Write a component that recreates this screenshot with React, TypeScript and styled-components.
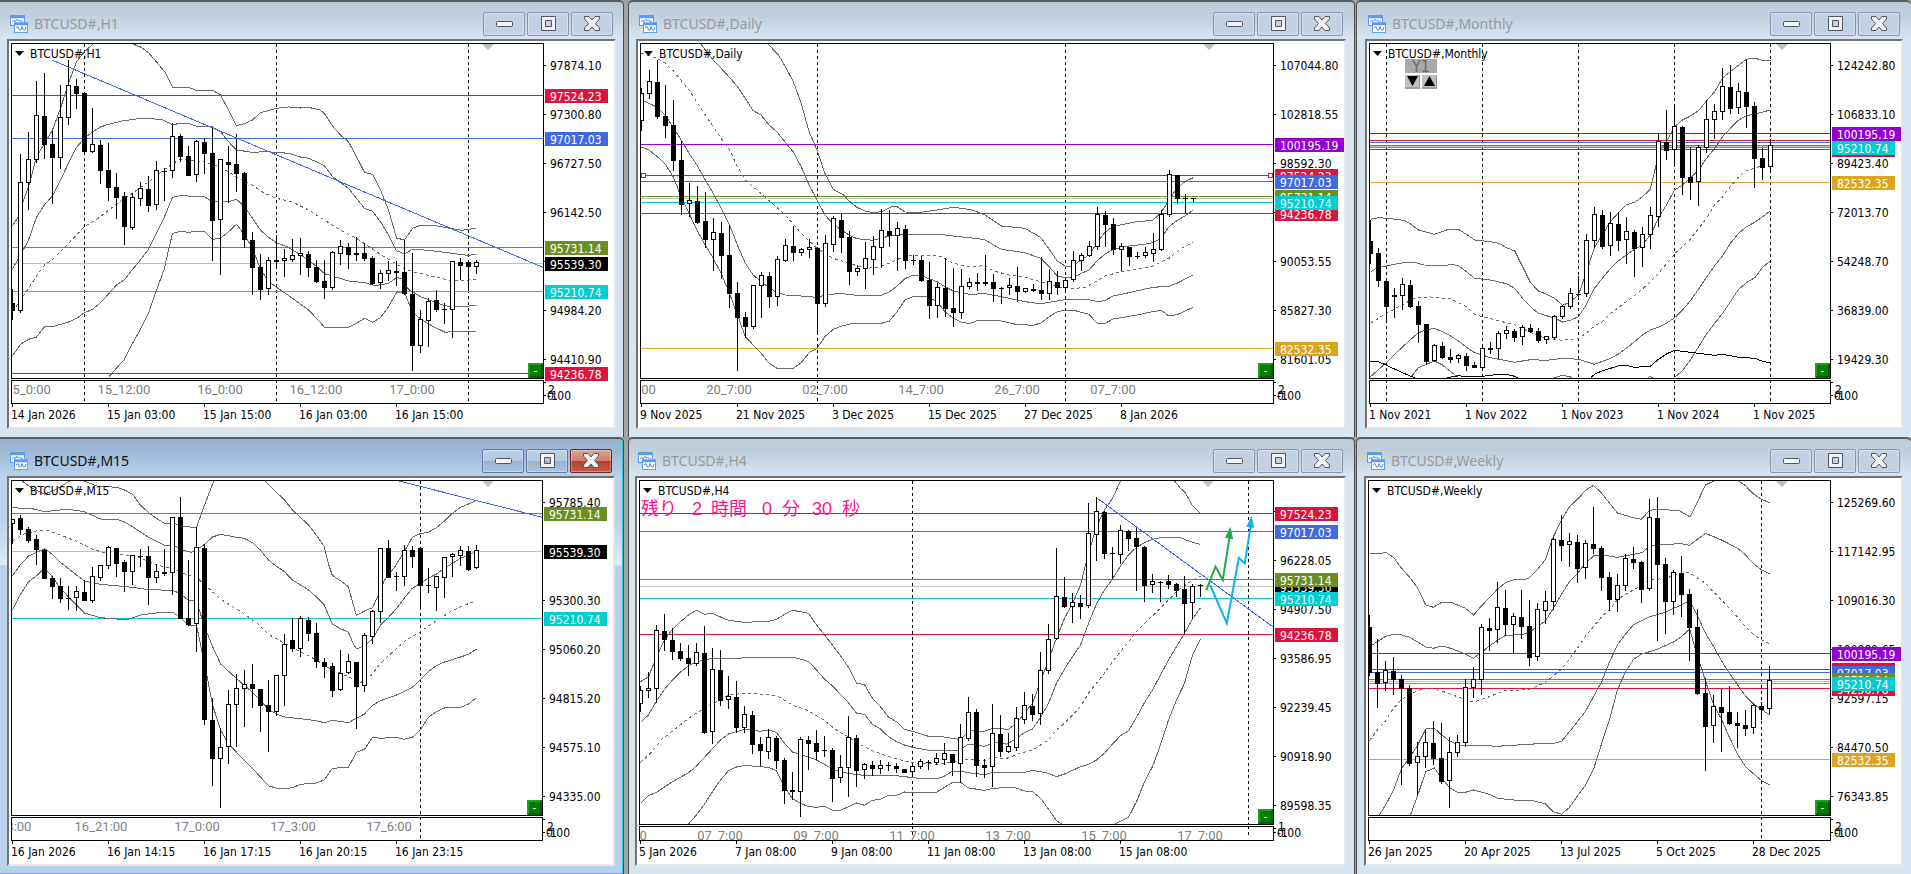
import React from "react";
import styled, { createGlobalStyle, css } from "styled-components";

const GlobalStyle = createGlobalStyle`
  * { box-sizing: border-box; }
  body {
    margin: 0;
    background: #a9a9a9;
    font-family: "Noto Sans", "Open Sans", sans-serif;
  }
`;

const AXIS_FONT = '"DejaVu Sans Condensed", "Noto Sans", sans-serif';

const COLORS = {
  crimson: "#dc143c",
  blue: "#4169e1",
  olive: "#6b8e23",
  silver: "#c0c0c0",
  turquoise: "#00ced1",
  violet: "#9400d3",
  gold: "#daa520",
  black: "#000000",
};

type ColorName = keyof typeof COLORS;

/* ---------- chart model ---------- */

/* Levels run downwards, three units to a pixel. Series x values use each
   chart's own scale: originX is the first bar, unitsX the units in a pixel. */
interface Mark {
  color: ColorName;
  level: number;
  price?: string;
}

interface ChartSpec {
  id: string;
  name: string;
  active?: boolean;
  insetLeft: number;
  insetRight: number;
  edges: "right" | "both" | "left";
  plotHeight: number;
  subHeight: number;
  baseY: number;
  originX: number;
  unitsX: number;
  candles: string;
  bands: string[];
  middle: string;
  extra?: string[];
  trend?: string;
  verticals: number[];
  marks: Mark[];
  scale: [number, string][];
  dates: string[];
  hours?: { start: number; step: number; labels: string[] };
  shiftMark: number;
  selected?: number;
  countdown?: boolean;
  forecast?: boolean;
  stepper?: boolean;
  subTop: string;
}

const BAR = 8;
const FIRST_BAR = 1;

const TOP = { plotHeight: 336, subHeight: 24, baseY: 43, subTop: "2" };
const BOTTOM = { plotHeight: 336, subHeight: 24, baseY: 50, subTop: "2" };

const charts: ChartSpec[] = [
  {
    ...TOP,
    id: "h1",
    name: "BTCUSD#,H1",
    insetLeft: 7,
    insetRight: 7,
    edges: "right",
    originX: 37,
    unitsX: 3,
    candles: `867,909,934,960,f 462,550,932,938,h 396,481,550,630,h 243,349,481,488,h 219,348,434,476,f
      393,432,474,612,f 255,355,473,507,h 180,259,355,375,h 237,258,282,327,f 277,279,456,458,f
      324,436,456,459,h 420,435,513,552,f 429,510,564,603,f 519,561,594,657,f 576,588,681,735,f
      579,595,683,690,h 545,568,598,618,h 528,567,618,636,f 483,514,616,630,h 504,513,515,603,f
      369,412,514,534,h 402,408,471,486,f 438,468,528,528,f 420,427,526,546,h 414,426,462,522,f
      384,459,663,783,f 477,481,661,825,h 438,486,494,609,f 402,492,522,576,f 516,519,720,744,f
      696,720,804,885,f 762,801,870,900,f 771,784,868,885,h 705,780,785,798,f 747,778,784,831,h
      717,769,779,785,h 714,763,769,825,h 753,762,804,831,f 780,801,846,849,f 780,843,864,897,f
      753,760,865,870,h 720,742,761,795,h 729,741,765,807,f 711,759,765,783,f 729,759,777,783,f
      768,774,852,855,f 810,823,850,867,h 783,814,823,843,h 783,813,819,858,f 720,816,882,885,f
      759,882,1038,1113,f 930,961,1037,1059,h 894,907,964,1041,h 870,900,930,936,f 909,927,930,972,f
      786,787,929,1014,h 774,786,798,840,f 780,786,801,873,f 780,790,800,822,h`,
    bands: [
      "37,678 61,640 70,600 85,562 109,470 133,430 157,390 181,325 205,250 229,185 253,155 280,131",
      "395,131 420,140 445,158 470,187 496,218 517,262 565,262 592,273 637,271 661,285 685,330 709,377 735,370 757,360 781,338 829,325 865,321 901,324 925,322 959,330 973,341 997,378 1021,405 1045,425 1069,470 1093,517 1117,523 1141,570 1165,630 1189,714 1213,720 1237,685 1261,676 1310,678 1345,684 1385,691 1427,685",
      "37,806 61,765 85,720 109,652 133,614 157,587 181,540 205,490 229,442 253,415 277,395 301,381 325,373 361,364 420,355 485,358 517,374 541,370 565,370 589,379 637,381 661,395 685,425 709,450 757,457 800,455 865,460 901,471 925,475 959,490 973,497 997,530 1021,548 1045,565 1069,595 1093,625 1117,634 1141,665 1165,705 1189,752 1213,762 1237,748 1285,751 1350,759 1400,766 1427,764",
      "37,1067 61,1033 85,1018 109,1011 133,980 157,980 205,966 229,955 253,938 277,928 301,908 325,882 349,855 373,839 397,808 421,780 445,748 469,700 493,650 517,592 541,587 613,590 637,606 685,605 709,598 733,620 757,655 781,690 805,712 829,728 865,742 901,765 925,780 959,808 973,821 1045,843 1093,848 1125,857 1165,850 1189,833 1205,835 1225,868 1261,890 1325,914 1345,919 1400,919 1427,915",
      "325,1132 349,1104 373,1078 397,1030 421,988 445,940 469,870 493,805 505,750 517,700 541,694 565,697 589,694 613,695 637,718 661,715 685,695 709,673 733,705 757,745 781,808 805,843 829,862 877,895 925,930 959,965 973,982 1045,982 1069,970 1093,955 1117,967 1141,953 1165,920 1189,878 1213,878 1237,935 1261,957 1300,980 1335,997 1350,995 1427,995",
    ],
    middle:
      "37,935 61,900 85,865 109,828 133,795 157,778 181,755 205,730 253,680 301,650 349,612 397,580 445,545 493,508 520,490 541,477 613,485 661,502 709,530 757,556 793,580 829,595 877,606 925,630 973,660 1021,691 1069,715 1141,763 1213,806 1237,815 1285,826 1345,840 1400,841 1427,838",
    trend: "157,181 1631,803",
    verticals: [253, 829, 1405],
    marks: [
      { color: "crimson", level: 286, price: "97524.23" },
      { color: "crimson", level: 1120, price: "94236.78" },
      { color: "blue", level: 415, price: "97017.03" },
      { color: "olive", level: 742, price: "95731.14" },
      { color: "silver", level: 790, price: "95539.30" },
      { color: "turquoise", level: 874, price: "95210.74" },
    ],
    scale: [[196, "97874.10"], [343, "97300.80"], [490, "96727.50"], [637, "96142.50"], [784, ""], [931, "94984.20"], [1078, "94410.90"]],
    dates: ["14 Jan 2026", "15 Jan 03:00", "15 Jan 15:00", "16 Jan 03:00", "16 Jan 15:00"],
    hours: { start: 17, step: 96, labels: ["15_0:00", "15_12:00", "16_0:00", "16_12:00", "17_0:00"] },
    shiftMark: 477,
  },
  {
    ...TOP,
    id: "daily",
    name: "BTCUSD#,Daily",
    insetLeft: 7,
    insetRight: 8,
    edges: "both",
    originX: 36,
    unitsX: 2.148,
    candles: `264,283,362,392,h 210,247,283,298,h 180,246,351,357,f 255,348,378,414,f 300,375,483,513,f
      423,480,615,645,f 549,604,613,650,h 558,603,669,672,f 576,663,720,744,f 654,700,719,813,h
      666,699,768,837,f 675,765,882,924,f 846,879,954,1112,f 936,950,981,1014,f 856,857,980,986,h
      815,829,857,954,h 816,828,891,924,f 768,781,890,918,h 717,739,782,785,h 678,738,759,783,f
      744,751,758,769,h 717,744,751,774,h 741,743,912,1000,f 706,733,911,921,h 648,658,734,756,h
      642,660,714,759,f 693,711,816,855,f 796,808,815,828,h 726,778,808,867,h 708,742,779,825,h
      627,694,743,804,h 630,693,708,741,f 666,688,707,813,h 675,687,783,807,f 765,779,783,795,f
      768,780,843,846,f 786,840,918,957,f 850,864,917,954,h 774,864,927,951,f 804,924,939,981,f
      807,862,938,957,h 835,850,862,868,h 819,847,851,873,f 765,845,852,859,f 822,846,867,906,f
      861,864,868,912,f 834,859,865,885,h 801,858,876,906,f 864,868,875,880,h 852,867,872,876,f
      771,870,882,900,f 807,847,881,900,h 813,846,864,885,f 834,844,863,870,h 753,784,841,846,h
      760,767,784,813,h 723,742,767,770,h 621,646,742,750,h 633,645,675,741,f 654,672,750,765,f
      729,742,751,813,h 741,742,771,798,f 756,768,771,777,f 741,760,769,774,h 699,751,761,786,h
      630,646,751,754,h 510,526,646,650,h 525,525,597,612,f 582,594,597,640,f 595,595,598,606,f`,
    bands: [
      "307,131 330,165 345,200 362,245 379,310 396,395 413,450 430,520 448,568 470,585 482,603 499,622 516,633 534,638 551,635 575,619 585,620 602,636 637,637 671,630 706,622 745,629 774,645 809,678 860,685 894,713 912,748 929,783 946,798 960,800 980,780 997,765 1015,728 1032,696 1049,680 1066,674 1100,665 1134,661 1152,638 1169,600 1186,565 1203,545 1221,533",
      "163,131 173,150 190,180 207,205 225,232 242,260 259,295 276,332 293,345 310,375 327,396 345,427 362,456 379,500 396,555 413,600 430,645 448,672 465,690 482,705 499,716 534,721 568,708 602,702 671,702 706,708 760,716 774,720 809,748 860,758 894,775 912,800 929,828 946,833 963,832 997,810 1015,782 1032,762 1049,748 1083,738 1117,733 1134,728 1152,715 1169,680 1186,662 1203,648 1221,630",
      "36,300 52,310 70,322 87,345 104,382 121,420 138,460 155,495 173,540 190,580 207,625 225,675 242,735 259,790 276,825 293,845 310,863 327,878 345,885 379,888 413,892 430,886 460,880 499,886 551,886 568,876 585,858 602,836 619,826 637,827 671,845 688,860 706,873 740,883 774,881 809,890 860,905 894,911 946,899 980,900 997,899 1018,905 1032,901 1049,888 1083,878 1134,862 1169,859 1186,850 1221,825",
      "36,441 52,450 70,470 87,492 104,530 121,590 138,640 155,690 173,735 190,775 207,820 225,880 242,945 259,1010 276,1035 293,1060 310,1090 327,1105 362,1105 379,1088 396,1058 413,1045 430,1010 448,988 465,979 490,970 551,970 568,964 585,935 602,900 619,890 650,890 671,905 688,935 706,955 723,966 740,971 757,962 809,963 840,973 877,976 894,969 912,950 929,935 946,931 965,931 980,937 997,943 1015,970 1032,970 1049,957 1100,945 1134,935 1152,931 1169,948 1186,944 1221,922",
    ],
    middle:
      "36,160 70,175 87,190 104,212 138,270 173,345 207,415 225,450 242,500 259,540 276,560 310,602 345,645 379,700 413,745 448,775 482,790 516,805 540,803 568,790 602,768 650,765 680,770 706,790 740,800 774,797 792,813 826,825 860,832 894,845 929,860 963,866 990,862 1032,828 1066,815 1100,808 1134,798 1169,775 1195,745 1221,728",
    verticals: [413, 946],
    marks: [
      { color: "silver", level: 595 },
      { color: "crimson", level: 526, price: "97524.23" },
      { color: "crimson", level: 640, price: "94236.78" },
      { color: "blue", level: 544, price: "97017.03" },
      { color: "olive", level: 589, price: "95731.14" },
      { color: "turquoise", level: 607, price: "95210.74" },
      { color: "violet", level: 433, price: "100195.19" },
      { color: "gold", level: 1045, price: "82532.35" },
    ],
    scale: [[196, "107044.80"], [343, "102818.55"], [490, "98592.30"], [637, ""], [784, "90053.55"], [931, "85827.30"], [1078, "81601.05"]],
    dates: ["9 Nov 2025", "21 Nov 2025", "3 Dec 2025", "15 Dec 2025", "27 Dec 2025", "8 Jan 2026"],
    hours: { start: -7, step: 96, labels: ["08_7:00", "20_7:00", "02_7:00", "14_7:00", "26_7:00", "07_7:00"] },
    shiftMark: 569,
    selected: 526,
  },
  {
    ...TOP,
    id: "monthly",
    name: "BTCUSD#,Monthly",
    insetLeft: 8,
    insetRight: 8,
    edges: "left",
    originX: 57,
    unitsX: 2.795,
    candles: `660,723,762,792,f 744,759,843,861,f 843,843,921,963,f 864,885,892,954,f 834,856,889,930,h
      840,855,920,924,f 903,918,975,1029,f 972,972,1086,1094,f 1033,1039,1084,1086,h 1026,1038,1074,1078,f
      1048,1071,1080,1090,f 1062,1069,1078,1089,h 1059,1068,1098,1113,f 1086,1094,1104,1104,f 1036,1048,1103,1105,h
      1026,1044,1049,1062,f 994,1003,1046,1077,h 978,994,1003,1017,h 986,993,1014,1026,f 975,985,1012,1035,h
      972,984,996,999,f 984,993,1023,1029,f 1008,1012,1021,1032,h 945,952,1013,1019,h 916,922,952,957,h
      864,883,922,927,h 829,882,886,900,f 702,724,883,891,h 621,646,724,743,h 630,645,741,747,f
      636,673,739,768,h 636,672,723,753,f 651,697,721,792,h 690,696,747,831,f 681,706,745,801,h
      621,649,706,747,h 402,427,650,681,h 330,426,453,480,f 321,382,451,492,h 378,381,534,585,f
      441,531,549,600,f 435,445,547,618,h 300,361,445,459,h 312,337,361,417,h 204,262,337,360,h
      195,261,327,342,f 249,277,325,342,h 180,276,321,384,f 306,318,477,564,f 444,474,504,540,f
      418,439,502,516,h`,
    bands: [
      "57,658 79,653 102,655 150,661 169,672 191,690 236,703 275,688 303,688 325,703 348,720 392,725 415,730 437,743 460,753 482,800 504,847 526,873 550,883 571,895 594,916 616,905 638,885 660,820 683,742 705,705 728,664 750,638 772,615 795,607 817,590 839,568 850,520 862,460 884,425 907,380 929,360 951,348 974,332 996,303 1019,275 1041,234 1063,215 1086,195 1108,178 1130,174 1150,181 1175,182",
      "57,817 75,803 102,798 124,793 155,787 180,787 205,795 270,796 285,793 303,797 325,815 348,835 392,840 437,851 460,865 482,895 504,920 526,940 571,954 594,966 616,961 638,950 660,915 683,865 705,835 728,805 750,782 772,765 795,748 817,735 839,705 862,655 884,615 907,570 929,555 951,535 974,510 996,475 1019,445 1041,410 1063,385 1086,360 1108,347 1131,342 1153,336 1175,330",
      "57,1130 102,1087 147,1040 191,998 213,990 236,985 258,995 281,1008 303,1023 325,1042 348,1058 370,1065 392,1073 437,1082 460,1087 504,1079 549,1081 594,1075 638,1078 660,1085 683,1093 705,1084 728,1075 750,1062 772,1045 795,1025 817,1005 839,990 862,982 884,970 907,953 929,930 951,902 974,867 996,832 1019,797 1041,767 1063,730 1086,700 1108,680 1131,667 1153,650 1175,632",
      "169,1132 191,1103 213,1093 236,1083 258,1095 281,1115 303,1132",
      "907,1132 929,1112 951,1080 974,1040 996,1003 1019,970 1041,940 1063,905 1086,868 1108,848 1131,833 1153,802 1175,782",
      "570,1134 594,1126 620,1132",
      "833,1133 839,1129 845,1133",
    ],
    middle:
      "57,970 102,940 150,912 180,895 225,891 281,897 325,920 348,943 370,950 415,962 460,975 504,997 549,1016 594,1021 638,1015 660,1000 683,978 705,965 728,940 772,905 817,868 862,820 907,762 951,717 996,655 1019,615 1041,590 1063,560 1086,530 1108,512 1153,497 1175,480",
    extra: [
      "57,1084 79,1085 95,1093 124,1107 150,1120 180,1133",
      "270,1133 303,1127 325,1130 370,1129 415,1123 437,1123 460,1129 468,1133",
      "673,1133 683,1123 705,1112 728,1105 750,1098 772,1096 795,1102 839,1099 862,1078 884,1062 907,1051 951,1057 974,1060 1019,1066 1041,1063 1086,1072 1131,1075 1153,1084 1175,1089",
    ],
    verticals: [102, 370, 638, 907, 1175],
    marks: [
      { color: "silver", level: 439 },
      { color: "crimson", level: 421 },
      { color: "crimson", level: 448, price: "94236.78" },
      { color: "blue", level: 427 },
      { color: "olive", level: 436 },
      { color: "turquoise", level: 442, price: "95210.74" },
      { color: "violet", level: 400, price: "100195.19" },
      { color: "gold", level: 547, price: "82532.35" },
    ],
    scale: [[196, "124242.80"], [343, "106833.10"], [490, "89423.40"], [637, "72013.70"], [784, "54248.70"], [931, "36839.00"], [1078, "19429.30"]],
    dates: ["1 Nov 2021", "1 Nov 2022", "1 Nov 2023", "1 Nov 2024", "1 Nov 2025"],
    shiftMark: 413,
    stepper: true,
  },
  {
    ...BOTTOM,
    id: "m15",
    name: "BTCUSD#,M15",
    active: true,
    insetLeft: 7,
    insetRight: 7,
    edges: "right",
    originX: 31,
    unitsX: 2.489,
    candles: `267,269,281,342,h 255,264,300,315,f 291,297,333,339,f 315,327,360,405,f 357,360,447,447,f
      438,444,471,507,f 444,468,507,519,f 468,504,508,540,f 468,487,505,543,h 450,486,513,513,f
      411,442,512,518,h 405,409,443,453,h 348,355,409,417,h 354,354,402,441,f 390,396,426,486,f
      378,379,425,465,h 357,378,381,411,f 348,378,444,525,f 402,427,445,459,h 357,426,432,438,f
      264,265,430,494,h 201,261,567,567,f 390,564,585,588,f 291,355,583,666,h 342,354,870,885,f
      804,870,987,1068,f 893,955,986,1134,h 780,826,952,1002,h 732,778,826,951,h 720,766,778,891,h
      702,762,777,834,f 777,777,828,906,f 750,825,846,966,f 738,739,845,858,h 612,646,739,828,h
      564,630,657,666,f 558,568,658,681,h 561,570,612,633,f 579,609,696,714,f 684,696,711,744,f
      699,708,783,801,f 660,733,779,783,h 672,697,728,732,h 696,696,771,897,f 610,619,767,786,h
      540,547,620,642,h 354,358,547,579,h 330,354,444,444,f 426,438,441,483,f 345,364,440,468,h
      348,360,381,414,f 354,354,468,534,f 414,465,469,489,f 442,442,473,543,h 384,385,445,504,h
      370,376,382,441,h 348,364,377,408,h 348,363,420,423,f 345,364,415,417,h`,
    bands: [
      "55,153 80,175 111,193 140,178 170,155 180,150",
      "210,153 240,168 290,172 310,180 330,193 349,225 369,247 389,265 409,280 435,281 455,290 489,292 509,225 532,153",
      "660,153 688,187 708,210 728,240 768,285 787,315 807,350 817,400 827,436 847,452 867,470 877,515 887,556 907,543 927,533 940,500 957,450 980,415 1006,365 1026,322 1046,311 1066,307 1086,293 1106,273 1126,250 1146,232 1166,222 1186,211",
      "31,231 50,235 80,236 111,245 150,240 170,238 210,245 250,267 295,270 310,276 330,290 369,322 409,345 435,348 455,360 475,367 489,360 509,343 529,321 549,313 588,322 608,325 628,338 648,360 668,390 688,409 708,425 728,450 768,480 787,500 807,525 827,582 847,596 867,606 877,635 887,657 907,647 927,628 947,585 967,562 987,535 1006,505 1026,475 1046,460 1066,445 1086,432 1106,415 1126,400 1146,385 1166,375 1186,365",
      "31,437 50,405 71,378 91,367 111,356 130,373 150,397 210,453 250,463 330,472 370,479 430,481 450,492 469,511 489,513 509,590 529,650 549,702 588,745 628,787 668,838 688,852 708,861 748,866 787,872 807,878 827,871 867,878 887,865 907,852 927,826 947,812 987,795 1026,772 1046,750 1066,725 1086,707 1106,696 1146,681 1166,673 1186,657",
      "31,540 50,495 71,455 91,437 111,414 130,440 150,475 180,513 210,549 250,563 315,569 350,555 400,547 430,547 450,563 469,586 489,586 509,700 529,825 549,900 568,940 588,966 628,1015 668,1067 688,1075 708,1076 728,1073 748,1063 787,1059 807,1050 827,1015 867,1012 887,967 907,958 927,922 947,925 987,922 1006,928 1026,922 1046,900 1066,862 1086,845 1106,834 1146,832 1166,822 1186,803",
    ],
    middle:
      "31,332 60,312 90,303 120,302 150,315 190,334 230,358 260,368 290,372 340,380 370,395 400,408 440,420 460,432 489,442 520,476 549,508 600,545 640,580 668,613 708,640 748,665 787,690 827,720 867,740 897,758 925,735 947,700 987,655 1006,635 1046,605 1086,572 1126,542 1150,528 1186,512",
    trend: "993,153 1350,262",
    verticals: [1046],
    marks: [
      { color: "silver", level: 364, price: "95539.30" },
      { color: "olive", level: 250, price: "95731.14" },
      { color: "turquoise", level: 565, price: "95210.74" },
    ],
    scale: [[217, "95785.40"], [511, "95300.30"], [658, "95060.20"], [805, "94815.20"], [952, "94575.10"], [1099, "94335.00"]],
    dates: ["16 Jan 2026", "16 Jan 14:15", "16 Jan 17:15", "16 Jan 20:15", "16 Jan 23:15"],
    hours: { start: -6, step: 96, labels: ["16_18:00", "16_21:00", "17_0:00", "17_3:00", "17_6:00"] },
    shiftMark: 477,
  },
  {
    ...BOTTOM,
    id: "h4",
    name: "BTCUSD#,H4",
    plotHeight: 345,
    subHeight: 15,
    subTop: "1",
    insetLeft: 6,
    insetRight: 8,
    edges: "both",
    originX: 46,
    unitsX: 3,
    candles: `768,784,821,846,h 726,777,784,804,h 585,604,778,819,h 552,603,630,663,f 594,630,666,690,f
      639,663,687,693,f 645,684,702,738,f 639,669,701,708,h 588,669,909,912,f 654,720,907,942,h
      660,720,813,828,f 738,802,811,837,h 753,801,894,909,f 828,856,895,909,h 843,855,945,972,f
      921,942,963,1008,f 897,925,965,987,h 918,924,993,1017,f 984,990,1083,1122,f 1026,1080,1085,1110,f
      921,931,1087,1161,h 918,930,942,1020,f 900,939,966,990,f 918,960,963,981,f 954,960,1047,1116,f
      975,1015,1045,1059,h 858,925,1015,1101,h 915,924,1023,1071,f 1000,1006,1021,1047,h 993,1005,1017,1038,f
      990,1009,1016,1032,h 996,1005,1009,1023,f 999,1008,1017,1029,f 1017,1017,1029,1029,f 1003,1012,1027,1041,h
      987,997,1012,1017,h 990,996,1000,1020,f 969,988,1000,1005,h 939,973,989,1005,h 972,972,999,1038,f
      882,925,1001,1059,h 801,850,926,933,h 837,846,1008,1041,f 987,1005,1014,1044,f 822,913,1012,1071,h
      855,912,966,981,f 909,952,965,969,h 831,868,953,963,h 786,829,869,882,h 792,828,855,873,f
      666,724,853,885,h 582,631,724,732,h 354,502,628,630,h 441,501,531,534,f 490,519,530,579,h
      495,519,531,567,f 219,313,529,534,h 201,247,314,393,h 243,246,372,387,f 351,369,372,447,f
      285,304,374,402,h 300,303,327,363,f 291,324,351,483,f 348,351,468,516,f 432,457,464,489,h
      453,456,459,516,f 435,453,465,477,f 459,461,483,501,f 438,477,522,612,f 462,471,518,567,h
      462,465,469,501,f`,
    bands: [
      "46,755 70,740 94,680 118,630 142,598 166,575 190,555 214,541 238,553 262,550 286,561 310,571 358,577 430,574 454,568 478,553 502,541 526,545 550,550 574,585 598,615 622,645 646,677 670,712 694,760 718,764 742,805 766,830 790,861 814,875 838,898 862,904 910,919 950,920 1000,928 1015,920 1030,902 1078,904 1102,895 1150,898 1174,880 1198,850 1222,820 1246,755 1270,690 1294,625 1318,565 1342,520 1366,465 1390,370 1414,290 1438,240 1462,205 1486,153",
      "1648,153 1666,175 1680,188 1690,205 1702,227 1726,250",
      "46,877 70,855 94,813 118,778 142,750 166,726 190,708 214,695 238,690 262,685 340,685 375,682 505,682 550,694 574,720 598,747 622,768 646,793 670,818 694,850 718,853 742,883 766,897 790,920 814,935 838,945 862,952 910,961 1000,961 1030,943 1078,949 1102,940 1126,937 1145,943 1174,925 1198,908 1222,897 1246,862 1270,820 1294,760 1318,717 1342,680 1366,645 1390,580 1414,522 1438,480 1462,447 1486,408 1510,375 1534,352 1558,338 1582,328 1606,323 1665,323 1702,337 1726,343",
      "46,1120 70,1097 94,1087 142,1055 190,1028 214,1008 238,982 286,930 310,912 358,898 406,904 430,900 455,908 478,940 502,966 526,973 574,990 598,1003 622,1018 646,1025 694,1034 720,1036 814,1037 880,1045 935,1046 958,1038 982,1024 1006,1023 1030,1028 1078,1034 1102,1027 1198,1027 1222,1021 1270,1030 1294,1040 1318,1032 1366,1010 1390,1003 1414,990 1438,970 1462,942 1486,917 1510,902 1534,862 1558,818 1582,780 1606,735 1630,690 1654,650 1678,610 1702,567 1726,533",
      "190,1182 214,1155 238,1122 262,1085 286,1050 310,1022 334,1011 362,1006 400,1010 430,1012 454,1022 478,1070 502,1106 526,1120 550,1130 574,1132 598,1129 622,1141 646,1141 694,1119 718,1126 742,1111 766,1108 790,1096 814,1096 838,1086 862,1087 934,1087 958,1072 982,1057 1006,1057 1030,1074 1078,1081 1102,1075 1165,1072 1198,1083 1222,1085 1246,1105 1270,1137 1294,1172 1310,1182",
      "1470,1182 1510,1162 1534,1115 1558,1055 1582,1010 1606,945 1630,870 1654,810 1678,760 1702,675 1726,628",
    ],
    middle:
      "46,998 80,965 110,928 150,897 190,865 220,846 262,822 310,795 360,790 430,794 460,800 502,825 550,842 598,872 640,905 670,920 694,938 742,962 790,980 838,993 880,1000 940,1003 980,997 1030,988 1078,993 1102,983 1145,985 1185,970 1222,960 1246,945 1270,930 1294,900 1318,880 1342,855 1366,830 1390,790 1414,760 1438,730 1462,695 1486,665 1510,635 1534,605 1558,580 1606,535 1654,485 1690,458 1726,438",
    trend: "1414,203 1945,592",
    verticals: [862, 1870],
    marks: [
      { color: "silver", level: 469, price: "95539.30" },
      { color: "crimson", level: 250, price: "97524.23" },
      { color: "crimson", level: 613, price: "94236.78" },
      { color: "blue", level: 304, price: "97017.03" },
      { color: "olive", level: 448, price: "95731.14" },
      { color: "turquoise", level: 505, price: "95210.74" },
    ],
    scale: [[244, ""], [391, "96228.05"], [538, "94907.50"], [685, "93586.95"], [832, "92239.45"], [979, "90918.90"], [1126, "89598.35"]],
    dates: ["5 Jan 2026", "7 Jan 08:00", "9 Jan 08:00", "11 Jan 08:00", "13 Jan 08:00", "15 Jan 08:00"],
    hours: { start: -15, step: 96, labels: ["05_7:00", "07_7:00", "09_7:00", "11_7:00", "13_7:00", "15_7:00", "17_7:00"] },
    shiftMark: 569,
    countdown: true,
    forecast: true,
  },
  {
    ...BOTTOM,
    id: "weekly",
    name: "BTCUSD#,Weekly",
    insetLeft: 7,
    insetRight: 8,
    edges: "left",
    originX: 54,
    unitsX: 2.795,
    candles: `555,591,729,738,f 627,726,762,834,f 693,724,760,783,h 681,723,750,795,f 735,747,777,1065,f
      765,774,1002,1008,f 936,982,1000,1096,h 897,940,982,1014,h 873,939,987,1005,f 879,984,1056,1062,f
      921,970,1054,1134,h 915,940,970,980,h 747,775,940,951,h 711,751,775,804,h 582,595,751,795,h
      564,594,603,663,f 456,535,601,639,h 480,534,585,618,f 549,562,584,670,h 480,561,591,627,f
      510,588,684,708,f 519,541,682,693,h 483,517,542,582,h 321,331,517,540,h 255,330,348,393,f
      309,337,346,411,h 315,336,417,459,f 330,343,415,447,h 231,342,357,372,f 348,354,444,483,f
      426,441,510,543,f 432,469,509,546,h 372,388,469,483,h 351,387,399,417,f 393,396,480,519,f
      207,265,478,483,h 201,264,405,633,f 384,402,516,612,f 420,430,515,555,h 378,429,495,561,f
      477,492,594,693,f 537,591,792,795,f 744,789,891,1023,f 795,832,889,939,h 777,831,849,966,f
      768,846,882,885,f 846,879,888,954,f 840,885,897,918,f 820,829,895,912,h 816,828,840,870,f
      708,754,838,852,h`,
    bands: [
      "54,370 90,370 99,367 121,382 144,415 166,442 189,475 211,525 233,532 256,517 285,518 322,535 345,555 367,528 389,503 412,477 434,458 457,449 490,448 501,443 524,418 546,388 568,320 591,270 613,230 635,208 658,181 680,166 703,190 725,220 747,249 792,263 814,268 837,241 860,238 920,242 950,261 971,215 993,165 1016,153",
      "1086,153 1105,167 1128,193 1150,208 1172,218",
      "54,650 76,635 99,619 121,613 144,615 166,622 189,636 211,651 233,655 256,648 285,656 322,672 345,685 367,667 389,648 412,631 434,616 480,614 501,606 524,590 546,572 568,535 591,492 613,455 635,430 658,400 680,378 703,375 747,382 792,373 815,368 837,350 860,344 926,341 949,346 971,327 993,310 1038,330 1083,355 1105,375 1128,402 1150,419 1172,431",
      "82,1154 99,1125 121,1080 144,1015 166,983 189,945 211,897 235,895 256,915 278,933 305,947 389,947 412,950 434,946 501,944 524,940 568,940 591,934 613,905 635,875 658,843 680,800 703,755 725,695 747,645 770,612 792,584 837,560 881,547 904,535 926,525 949,511 971,558 993,610 1016,650 1038,693 1060,730 1083,765 1105,798 1128,823 1150,838 1172,855",
      "169,1154 189,1095 211,1025 235,1014 256,1045 278,1073 300,1087 322,1087 345,1080 389,1093 412,1105 457,1110 510,1112 546,1122 568,1145 591,1153 613,1132 635,1098 658,1065 680,1018 703,940 725,868 747,780 770,725 792,688 814,673 860,657 904,636 926,620 949,597 971,680 993,753 1016,825 1038,868 1060,922 1083,973 1105,1010 1128,1032 1150,1052 1172,1065",
    ],
    middle:
      "54,932 76,900 99,872 121,835 144,808 166,793 205,776 233,777 256,783 300,800 345,817 389,800 434,780 479,780 501,778 546,757 591,717 613,687 635,655 658,618 680,590 703,560 725,538 747,510 770,492 792,480 837,450 881,445 926,430 949,428 993,460 1016,487 1038,510 1083,562 1105,590 1128,614 1150,630 1172,641",
    verticals: [1150],
    marks: [
      { color: "silver", level: 754 },
      { color: "crimson", level: 718, price: "97524.23" },
      { color: "crimson", level: 775, price: "94236.78" },
      { color: "blue", level: 727, price: "97017.03" },
      { color: "olive", level: 748, price: "95731.14" },
      { color: "turquoise", level: 760, price: "95210.74" },
      { color: "violet", level: 670, price: "100195.19" },
      { color: "gold", level: 988, price: "82532.35" },
    ],
    scale: [[217, "125269.60"], [364, "117142.95"], [511, "109016.30"], [658, "100889.65"], [805, "92597.15"], [952, "84470.50"], [1099, "76343.85"]],
    dates: ["26 Jan 2025", "20 Apr 2025", "13 Jul 2025", "5 Oct 2025", "28 Dec 2025"],
    shiftMark: 414,
  },
];

/* ---------- coordinate helpers ---------- */

const rowOf = (spec: ChartSpec, level: number) => Math.floor(level / 3) - spec.baseY;
const edgeOf = (spec: ChartSpec, level: number) => Math.round(level / 3) - spec.baseY;
const columnOf = (spec: ChartSpec, x: number) =>
  Math.round((x - spec.originX) / spec.unitsX) + FIRST_BAR;

const polyline = (spec: ChartSpec, source: string) =>
  source
    .split(" ")
    .map((pair) => {
      const [x, y] = pair.split(",").map(Number);
      const px = (x - spec.originX) / spec.unitsX + FIRST_BAR + 0.5;
      const py = y / 3 - spec.baseY;
      return `${px.toFixed(1)},${py.toFixed(1)}`;
    })
    .join(" ");

/* ---------- window chrome ---------- */

const Desktop = styled.main`
  display: grid;
  grid-template-columns: 627fr 727fr 555fr;
  column-gap: 1px;
  min-height: 100vh;
  align-content: start;
  background: #a3a3a3;
`;

const Frame = styled.section<{ $active?: boolean; $edges: ChartSpec["edges"]; $left: number; $right: number }>`
  min-width: 0;
  display: flex;
  flex-direction: column;
  padding: 0 ${(p) => p.$right}px 8px ${(p) => p.$left}px;
  border-style: solid;
  border-color: #4c4c4c;
  border-width: 2px ${(p) => (p.$edges === "left" ? 0 : 1)}px 0 ${(p) => (p.$edges === "right" ? 0 : 1)}px;
  border-top-color: #5c5c5c;
  border-radius: ${(p) => (p.$edges === "right" ? "0 5px 0 0" : "5px 5px 0 0")};
  margin-right: ${(p) => (p.$edges === "right" ? 3 : 0)}px;
  background: linear-gradient(#bccbda 0, #c3d0de 16px, #d7e4f2 36px);
  ${(p) =>
    p.$active &&
    css`
      background: linear-gradient(#98b3d2 0, #9fbad7 14px, #b9d1ea 37px, #b9d1ea 80px, #dfeaf6 126px, #b9d1ea 127px);
      box-shadow: inset -1px -1px 0 #2fc5dc;
    `}
`;

const TitleBar = styled.header`
  height: 37px;
  flex: none;
  display: flex;
  align-items: flex-start;
  padding: 10px 3px 0 3px;
`;

const TitleIcon = styled.svg`
  width: 18px;
  height: 18px;
  margin-top: 3px;
  flex: none;
`;

const Title = styled.h2<{ $active?: boolean }>`
  margin: 0 0 0 6px;
  flex: 1;
  min-width: 0;
  font-size: 14px;
  line-height: 24px;
  font-weight: 400;
  white-space: nowrap;
  color: ${(p) => (p.$active ? "#101010" : "#999a9c")};
`;

const WindowButtons = styled.div`
  display: flex;
  gap: 2px;
`;

const WindowButton = styled.button<{ $tone: "idle" | "active" | "danger" }>`
  width: 42px;
  height: 24px;
  padding: 0;
  display: grid;
  place-items: center;
  border-radius: 2px;
  border: 1px solid #8995b1;
  background: #c3d1e2;
  box-shadow: inset 0 0 0 1px rgba(255, 255, 255, 0.3);
  ${(p) =>
    p.$tone === "active" &&
    css`
      border-color: #5f7a9e;
      background: linear-gradient(#bdd0e5 0, #b0c7df 11px, #98b3d1 11px, #aac3de 100%);
    `}
  ${(p) =>
    p.$tone === "danger" &&
    css`
      border-color: #6b2a2e;
      background: linear-gradient(#dca69b 0, #cf7a6c 11px, #b63f27 11px, #c65e45 100%);
    `}
`;

const Client = styled.div`
  display: grid;
  grid-template-columns: minmax(0, 1fr) 70px;
  row-gap: 0;
  padding: 2px 0 0 2px;
  background: #ffffff;
  border: 2px solid;
  border-color: #737373 #e6e6e6 #e6e6e6 #737373;
`;

/* ---------- chart parts ---------- */

const PlotArea = styled.div`
  position: relative;
  margin-bottom: 1px;
`;

const Surface = styled.svg<{ $height: number; $spill?: boolean }>`
  display: block;
  width: 100%;
  height: ${(p) => p.$height}px;
  overflow: ${(p) => (p.$spill ? "visible" : "hidden")};
`;

const AxisText = styled.text`
  font-family: ${AXIS_FONT};
  font-size: 12px;
  white-space: pre;
`;

const HourText = styled.text`
  font-family: Roboto, "Liberation Sans", sans-serif;
  font-size: 13px;
  fill: #808080;
`;

const CountdownText = styled.text`
  font-family: "Liberation Sans", "Noto Sans CJK JP", sans-serif;
  font-size: 18px;
  fill: #ff1493;
`;

const CollapseButton = styled.button`
  position: absolute;
  right: 1px;
  bottom: 1px;
  width: 15px;
  height: 15px;
  padding: 0;
  border: 2px solid;
  border-color: #1fa01f #036003 #036003 #1fa01f;
  background: #008000;
  color: #ffffff;
  font: 12px/10px ${AXIS_FONT};
`;

const Stepper = styled.div`
  position: absolute;
  left: 36px;
  top: 16px;
  width: 32px;
  display: grid;
  grid-template-columns: 1fr 1fr;
  gap: 2px;
`;

const StepperLabel = styled.span`
  grid-column: 1 / -1;
  height: 14px;
  background: #a9a9a9;
  color: #696969;
  font: 16px/15px ${AXIS_FONT};
  text-align: center;
`;

const StepperButton = styled.button`
  height: 14px;
  padding: 0;
  display: grid;
  place-items: center;
  border: 0;
  border-right: 1px solid #909090;
  border-bottom: 2px solid #a0a0a0;
  background: #c0c0c0;
`;

function ChartIcon() {
  return (
    <TitleIcon viewBox="0 0 18 18" aria-hidden="true">
      <rect x="0.5" y="1.5" width="14" height="9" fill="#ffffff" stroke="#5b9af3" />
      <path d="M0 0.5H15M0 2.5H15" stroke="#5b9af3" strokeWidth="1.6" />
      <path d="M1 0.5H15" stroke="#63b56f" strokeWidth="1" strokeDasharray="2 3" />
      <path d="M2 7L4 5L5 7L7 4L8 6L10 5L11 7L13 6" fill="none" stroke="#5b9af3" />
      <rect x="4.5" y="8.5" width="13" height="9" fill="#ffffff" stroke="#5b9af3" />
      <path d="M4 8H18M4 9.5H18" stroke="#5b9af3" strokeWidth="1.6" />
      <path d="M17.5 9V17M5 17.5H17" stroke="#63b5a0" strokeWidth="1" strokeDasharray="2 2" />
      <path d="M6 13L8 11.5L9.5 15L11 15L12 11.5L13.5 15L15 15L16 12" fill="none" stroke="#4a86e8" />
    </TitleIcon>
  );
}

function MinimizeGlyph() {
  return (
    <svg width="17" height="6" aria-hidden="true">
      <rect x="0.5" y="0.5" width="16" height="5" rx="1" fill="#f3f3f3" stroke="#535666" />
    </svg>
  );
}

function MaximizeGlyph() {
  return (
    <svg width="17" height="16" aria-hidden="true">
      <path
        d="M1.5 0.5H15.5V14.5H1.5ZM5.5 4.5H11.5V10.5H5.5Z"
        fill="#f3f3f3"
        fillRule="evenodd"
        stroke="#535666"
      />
    </svg>
  );
}

function CloseGlyph() {
  return (
    <svg width="18" height="16" aria-hidden="true">
      <path
        d="M1.5 0.5H6L9 4L12 0.5H16.5V3L12.5 7.5L16.5 12V14.5H12L9 11L6 14.5H1.5V12L5.5 7.5L1.5 3Z"
        fill="#f3f3f3"
        stroke="#535666"
        strokeLinejoin="round"
      />
    </svg>
  );
}

function Candles({ spec }: { spec: ChartSpec }) {
  return (
    <g shapeRendering="crispEdges">
      {spec.candles
        .trim()
        .split(/\s+/)
        .map((bar, i) => {
          const [high, top, bottom, low, kind] = bar.split(",");
          const x = FIRST_BAR + i * BAR;
          const yHigh = edgeOf(spec, Number(high));
          const yLow = edgeOf(spec, Number(low));
          const yTop = edgeOf(spec, Number(top));
          const yBottom = Math.max(edgeOf(spec, Number(bottom)), yTop + 1);
          const hollow = kind === "h" && yBottom - yTop > 1;
          return (
            <g key={i}>
              <rect x={x} y={yHigh} width={1} height={Math.max(yLow - yHigh, 1)} />
              {hollow ? (
                <rect x={x - 1.5} y={yTop - 0.5} width={4} height={yBottom - yTop} fill="#ffffff" stroke="#000000" />
              ) : (
                <rect x={x - 2} y={yTop} width={5} height={yBottom - yTop} />
              )}
            </g>
          );
        })}
    </g>
  );
}

function Forecast({ spec }: { spec: ChartSpec }) {
  return (
    <g fill="none" strokeWidth={2}>
      <polyline points={polyline(spec, "1743,481 1771,410 1793,450 1813,322")} stroke="#22ab4b" />
      <polygon points={polyline(spec, "1816,290 1799,323 1824,328")} fill="#22ab4b" />
      <polyline points={polyline(spec, "1755,465 1805,580 1841,384 1859,400 1876,290")} stroke="#0cb2f2" />
      <polygon points={polyline(spec, "1879,258 1863,290 1887,294")} fill="#0cb2f2" />
    </g>
  );
}

function Countdown() {
  return (
    <CountdownText y={35}>
      <tspan x={2}>残り</tspan>
      <tspan x={53}>2</tspan>
      <tspan x={72}>時間</tspan>
      <tspan x={123}>0</tspan>
      <tspan x={143}>分</tspan>
      <tspan x={173}>30</tspan>
      <tspan x={203}>秒</tspan>
    </CountdownText>
  );
}

function Plot({ spec }: { spec: ChartSpec }) {
  const h = spec.plotHeight;
  return (
    <PlotArea>
      <Surface $height={h} role="img" aria-label={`${spec.name} price chart`}>
        <g shapeRendering="crispEdges">
          {spec.verticals.map((x) => (
            <line
              key={x}
              x1={columnOf(spec, x) + 0.5}
              x2={columnOf(spec, x) + 0.5}
              y1={1}
              y2={h}
              stroke="#000000"
              strokeDasharray="3 3"
            />
          ))}
          {spec.marks.map((m) => (
            <line
              key={m.level}
              x1={0}
              x2="100%"
              y1={rowOf(spec, m.level) + 0.5}
              y2={rowOf(spec, m.level) + 0.5}
              stroke={COLORS[m.color]}
            />
          ))}
          <g fill="none" stroke="#696969">
            {spec.bands.map((b) => (
              <polyline key={b} points={polyline(spec, b)} />
            ))}
            <polyline points={polyline(spec, spec.middle)} strokeDasharray="3 3" />
          </g>
          {spec.extra?.map((line) => (
            <polyline key={line} points={polyline(spec, line)} fill="none" stroke="#000000" />
          ))}
        </g>
        <Candles spec={spec} />
        {spec.trend && (
          <polyline
            points={polyline(spec, spec.trend)}
            fill="none"
            stroke={COLORS.blue}
            shapeRendering="crispEdges"
          />
        )}
        {spec.forecast && <Forecast spec={spec} />}
        <polygon
          points={`${spec.shiftMark - 6},1 ${spec.shiftMark + 6},1 ${spec.shiftMark},7`}
          fill="#c0c0c0"
        />
        <polygon points="4,8 13,8 8.5,13" />
        <AxisText x={19} y={15}>
          {spec.name}
        </AxisText>
        {spec.countdown && <Countdown />}
        <rect x={0} y={0} width="100%" height={1} />
        <rect x={0} y={h - 1} width="100%" height={1} />
        <rect x={0} y={0} width={1} height={h} />
        <svg x="100%" overflow="visible">
          <rect x={-1} y={0} width={1} height={h} />
          {spec.selected && (
            <rect x={-5.5} y={rowOf(spec, spec.selected) - 1.5} width={4} height={4} fill="#fff" stroke={COLORS.crimson} />
          )}
        </svg>
        {spec.selected && (
          <rect x={1.5} y={rowOf(spec, spec.selected) - 1.5} width={4} height={4} fill="#fff" stroke={COLORS.crimson} />
        )}
      </Surface>
      {spec.stepper && (
        <Stepper>
          <StepperLabel>Y1</StepperLabel>
          <StepperButton type="button" aria-label="Previous period">
            <svg width="11" height="10" aria-hidden="true">
              <path d="M0 0H11L5.5 10Z" />
            </svg>
          </StepperButton>
          <StepperButton type="button" aria-label="Next period">
            <svg width="11" height="10" aria-hidden="true">
              <path d="M0 10H11L5.5 0Z" />
            </svg>
          </StepperButton>
        </Stepper>
      )}
      <CollapseButton type="button" aria-label="Collapse panel">
        -
      </CollapseButton>
    </PlotArea>
  );
}

function PriceAxis({ spec }: { spec: ChartSpec }) {
  return (
    <Surface $height={spec.plotHeight} $spill role="img" aria-label={`${spec.name} price scale`}>
      {spec.scale.map(([level, price]) => (
        <g key={level}>
          <rect x={0} y={rowOf(spec, level)} width={2} height={1} />
          <AxisText x={6} y={rowOf(spec, level) + 5}>
            {price}
          </AxisText>
        </g>
      ))}
      {spec.marks
        .filter((m) => m.price)
        .map((m) => {
          const y = rowOf(spec, m.level);
          return (
            <g key={m.level}>
              <rect
                x={1}
                y={y - 6}
                width={(m.price as string).length > 8 ? 69 : 63}
                height={14}
                fill={m.color === "silver" ? COLORS.black : COLORS[m.color]}
              />
              <AxisText x={6} y={y + 6} fill="#ffffff">
                {m.price}
              </AxisText>
            </g>
          );
        })}
    </Surface>
  );
}

function HoursStrip({ spec }: { spec: ChartSpec }) {
  const h = spec.subHeight;
  return (
    <Surface $height={h} role="img" aria-label={`${spec.name} local hours`}>
      {spec.verticals.map((x) => (
        <line
          key={x}
          x1={columnOf(spec, x) + 0.5}
          x2={columnOf(spec, x) + 0.5}
          y1={0}
          y2={h - 3}
          stroke="#000000"
          strokeDasharray="3 3"
        />
      ))}
      {spec.hours?.labels.map((label, i) => (
        <HourText key={label} x={spec.hours!.start + i * spec.hours!.step} y={14} textAnchor="middle">
          {label}
        </HourText>
      ))}
      <rect x={0} y={0} width="100%" height={1} />
      <rect x={0} y={h - 1} width="100%" height={1} />
      <rect x={0} y={0} width={1} height={h} />
      <svg x="100%" overflow="visible">
        <rect x={-1} y={0} width={1} height={h} />
      </svg>
    </Surface>
  );
}

function HoursScale({ spec }: { spec: ChartSpec }) {
  const base = spec.subHeight - 4;
  return (
    <Surface $height={spec.subHeight} $spill role="img" aria-label={`${spec.name} hours scale`}>
      <rect x={0} y={2} width={2} height={1} />
      <rect x={0} y={base - 5} width={2} height={1} />
      <AxisText x={4} y={base - 6}>
        {spec.subTop}
      </AxisText>
      <AxisText x={3} y={base}>
        0.00
      </AxisText>
      <AxisText x={3} y={base}>
        -1
      </AxisText>
    </Surface>
  );
}

function TimeAxis({ spec }: { spec: ChartSpec }) {
  return (
    <Surface $height={23} role="img" aria-label={`${spec.name} time scale`}>
      {spec.dates.map((label, i) => (
        <g key={label}>
          <rect x={FIRST_BAR + i * 96} y={0} width={1} height={3} />
          <AxisText x={i * 96} y={15}>
            {label}
          </AxisText>
        </g>
      ))}
    </Surface>
  );
}

function ChartWindow({ spec }: { spec: ChartSpec }) {
  const tone = spec.active ? "active" : "idle";
  return (
    <Frame
      $active={spec.active}
      $edges={spec.edges}
      $left={spec.insetLeft}
      $right={spec.active ? spec.insetRight + 1 : spec.insetRight}
    >
      <TitleBar>
        <ChartIcon />
        <Title $active={spec.active}>{spec.name}</Title>
        <WindowButtons>
          <WindowButton type="button" $tone={tone} aria-label="Minimize">
            <MinimizeGlyph />
          </WindowButton>
          <WindowButton type="button" $tone={tone} aria-label="Maximize">
            <MaximizeGlyph />
          </WindowButton>
          <WindowButton type="button" $tone={spec.active ? "danger" : "idle"} aria-label="Close">
            <CloseGlyph />
          </WindowButton>
        </WindowButtons>
      </TitleBar>
      <Client>
        <Plot spec={spec} />
        <PriceAxis spec={spec} />
        <HoursStrip spec={spec} />
        <HoursScale spec={spec} />
        <TimeAxis spec={spec} />
      </Client>
    </Frame>
  );
}

export default function App() {
  return (
    <>
      <GlobalStyle />
      <Desktop>
        {charts.map((spec) => (
          <ChartWindow key={spec.id} spec={spec} />
        ))}
      </Desktop>
    </>
  );
}
